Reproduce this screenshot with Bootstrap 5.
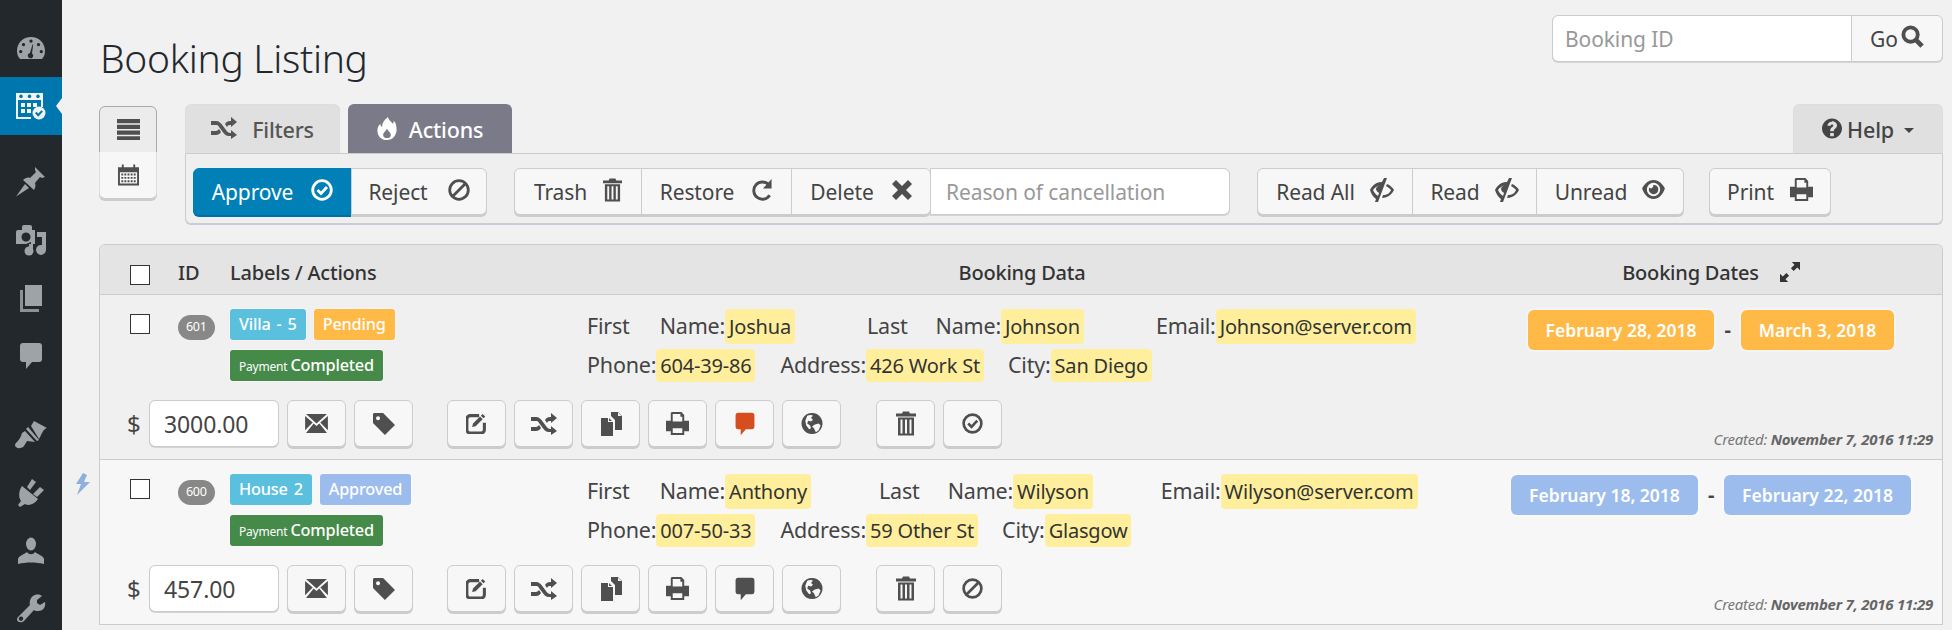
<!doctype html>
<html lang="en"><head><meta charset="utf-8"><title>Booking Listing</title>
<link href="https://cdn.jsdelivr.net/npm/bootstrap@5.3.0/dist/css/bootstrap.min.css" rel="stylesheet">
<style>
html,body{height:630px;overflow:hidden}
body{background:#f1f1f1;font-family:"Noto Sans","Open Sans",sans-serif;color:#444;font-size:20px;letter-spacing:-.2px}
.ic{display:inline-block;fill:currentColor;flex:none}
.wpbar{width:62px;flex:none;background:#23282d;padding-top:19px;height:630px;color:#9ea3a8}
.wpitem{height:58px;display:flex;align-items:center;justify-content:center;position:relative}
.wpitem.on{background:#0076ae;color:#f1f3f5}
.wpitem.on::after{content:"";position:absolute;right:0;top:21px;border-style:solid;border-color:transparent #f1f1f1 transparent transparent;border-width:8px 6px 8px 0}
.sep1{margin-top:18px}.sep2{margin-top:21px}
.mainarea{flex:1;min-width:0;padding:15px 9px 0 37px;position:relative}
.bolt{position:absolute;left:12px;top:473px;color:#8fb0dc}
.headrow{height:89px}
.pagetitle{font-size:39px;font-weight:300;color:#23282d;margin:20px 0 0 1px;line-height:46px;letter-spacing:-.3px}
.findbox{width:391px;height:48px}
.findbox .form-control{height:47px}
.form-control.fld{border-color:#ccc;font-size:21px;color:#444;border-radius:6px;box-shadow:0 1px 0 #d4d4d4;letter-spacing:-.1px}
.fld::placeholder{color:#999}
.btn.tb{background:#f7f7f7;border:1px solid #ccc;color:#444;font-size:21px;letter-spacing:-.1px;border-radius:6px;box-shadow:0 2px 0 #ccc;display:flex;align-items:center;justify-content:center;height:47px;padding:2px 0 0;--bs-btn-hover-bg:#f7f7f7}
.btn.tb .ic{margin-top:-6px;color:#4f4f4f}
.btn.gobtn{width:92px;gap:3px;box-shadow:0 1px 0 #d4d4d4;border-radius:0 6px 6px 0}
.viewpick{width:58px;height:93px;flex:none;margin:2px 28px 0 0}
.viewpick .btn.tb{height:46px;width:58px;padding:0;border-color:#aaa;background:#ececec;color:#555;box-shadow:none}
.viewpick .btn.tb .ic{margin-top:0}
.viewpick .btn.tb+.btn.tb{background:#f7f7f7;border-color:#ddd #ddd #ccc;border-top:0;box-shadow:0 2px 0 #ccc}
.tabbox{flex:1;min-width:0}
.tabline{gap:8px;height:49px}
.tabitem{height:49px;display:flex;align-items:center;justify-content:center;background:#e0e0e0;border:1px solid #ddd;border-bottom:0;border-radius:6px 6px 0 0;color:#555;font-size:21.5px;font-weight:500;letter-spacing:-.2px;padding-top:2px}
.tabitem .ic{margin-top:-4px}
.tf{width:155px;gap:15px}
.ta{width:164px;gap:12px;background:#7b7a89;border-color:#7b7a89;color:#fff}
.th{width:150px;margin-left:auto;gap:5px;font-weight:500;color:#444}
.caretdn{border-style:solid;border-color:#444 transparent transparent;border-width:5px 5px 0;margin-left:5px}
.panelbar{height:71px;border:1px solid #ccc;border-radius:0 0 6px 6px;background:#efefef;box-shadow:0 1px 0 #c9c9d9;padding:14px 0 0 7px}
.btn-group .btn.tb+.btn.tb{margin-left:-1px}
.btn.tb.appr{background:#0080b7;border-color:#0080b7;color:#fff;width:159px;gap:18px;box-shadow:0 2px 0 #0070a3}
.btn.tb.appr .ic{color:#fff}
.w135{width:136px;gap:20px}.w128{width:128px;gap:16px}.w150{width:151px;gap:17px}.w140{width:140px;gap:18px}
.w156{width:156px;gap:15px}.w124{width:125px;gap:15px}.w148{width:148px;gap:15px}.w122{width:122px;gap:16px}
.form-control.fld.reason{width:300px;height:47px;border-radius:0 6px 6px 0;margin-left:-1px;padding-left:15px}
.gapa{margin-left:27px}.gapb{margin-left:25px}
.booktable{margin-top:20px;border:1px solid #ccc;border-bottom:0;border-radius:6px 6px 0 0;overflow:hidden}
.gridline{display:grid;grid-template-columns:78px 52px 357px 870px 1fr}
.headline{height:50px;background:#e4e4e4;border-bottom:1px solid #ccc;font-size:20px;font-weight:500;color:#333;align-items:center;padding-top:7px}
.tick{appearance:none;width:20px;height:20px;margin:0 0 0 30px;background:#fff;border:1px solid #333;display:block}
.headline .tick{margin-top:3px}
.centercell{text-align:center}
.dcell{padding-left:23px;text-align:center}
.headline .dcell .ic{margin-top:-6px}
.bookrow{height:165px;border-bottom:1px solid #ccc;padding-top:14px;background:#f0f0f0}
.bookrow.alt{background:#f7f7f7}
.toparea{height:91px}
.toparea .tick{margin-top:5px}
.idpill{display:inline-block;background:#888;color:#fff;border-radius:13px;height:25px;line-height:24px;font-size:12.5px;padding:0 8px;margin-top:1px;letter-spacing:-.3px}
.lab{display:inline-flex;align-items:center;height:31px;padding:0 9px;border-radius:3px;color:#fff;font-size:16.3px;font-weight:500;letter-spacing:-.2px;word-spacing:2px;box-shadow:0 0 0 1px rgba(255,255,255,.35)}
.lab small{font-size:12px;margin-right:3px;font-weight:400;padding-top:2px}
.lab-c{background:#5bc0de}.lab-o{background:#ffb946}.lab-b{background:#9cbcee}.lab-g{background:#458a48}
.labrow{gap:8px;margin-bottom:10px}
.infoline{display:flex;align-items:center;height:35px;margin-bottom:5px;white-space:nowrap;font-size:21.5px}
.infoline.two{height:33px}
.val{background:#ffef9c;color:#333;border-radius:4px;height:100%;display:flex;align-items:center;padding:0 4px;font-size:20px}
.datelab{display:inline-flex;align-items:center;height:40px;padding:0 18px;border-radius:6px;color:#fff;font-weight:600;font-size:17.5px;letter-spacing:0;box-shadow:0 0 0 2px rgba(255,255,255,.3)}
.dateline{margin-top:1px}
.dash{margin:0 10px;font-weight:700;color:#444}
.actline{padding-left:27px;height:48px}
.money{font-size:24px;margin-right:8px;width:14px}
.form-control.fld.amount{width:130px;height:47px;font-size:23px;padding-left:14px}
.btn.tb.ab{width:59px;margin-left:8px;padding:0}
.btn.tb.ab .ic{margin-top:0}
.btn.tb.sp2{margin-left:34px}.btn.tb.sp3{margin-left:35px}
.stamp{margin-left:auto;align-self:flex-end;font-size:15px;font-style:italic;color:#777;padding-right:9px;line-height:18px;letter-spacing:-.25px}
.stamp b{color:#666}
.gap30{margin-left:30px}.gap28{margin-left:28px}.gap72{margin-left:72px}.gap68{margin-left:68px}
.gap25{margin-left:25px}.gap24{margin-left:24px}
.btn.tb.redc .ic{color:#d64e1f}
</style></head>
<body class="d-flex">
<svg width="0" height="0" class="position-absolute">
<symbol id="i-dash" viewBox="0 0 28 24"><path fill-rule="evenodd" d="M3 23C1 21 0 18 0 15 0 7 6 1 14 1s14 6 14 14c0 3-1 6-3 8ZM14 3.500a1.600 1.600 0 1 0 .01 0ZM6.500 7a1.600 1.600 0 1 0 .01 0ZM21.500 7a1.600 1.600 0 1 0 .01 0ZM3.700 14a1.600 1.600 0 1 0 .01 0ZM24.300 14a1.600 1.600 0 1 0 .01 0ZM15.500 8.500 13 17a2.700 2.700 0 1 0 2 .4l1.200-8.900Z"/></symbol>
<symbol id="i-cal" viewBox="0 0 32 28"><path fill-rule="evenodd" d="M1 1h27v14h-2V8H3v17h13v2H1ZM6 2.500a1.800 1.800 0 1 0 .01 0ZM14.500 2.500a1.800 1.800 0 1 0 .01 0ZM23 2.500a1.800 1.800 0 1 0 .01 0Z"/><path d="M6 11h4v4H6zM12 11h4v4h-4zM18 11h4v4h-4zM6 17h4v4H6zM12 17h4v4h-4z"/><circle cx="24" cy="21" r="6.500" /><path d="m20.800 20.500 2.400 2.700 4-4.400" fill="none" stroke="#0076ae" stroke-width="2"/></symbol>
<symbol id="i-pin" viewBox="0 0 30 30"><path d="M19 0 29 10l-3 1-2-1-5 6c1 3 0 5-1 7L7 13c2-2 5-3 7-2l6-6-1-2ZM9 17l4 4L0 29.500Z"/></symbol>
<symbol id="i-media" viewBox="0 0 32 32"><path fill-rule="evenodd" d="M7 6V3a2 2 0 0 1 2-2h6a2 2 0 0 1 2 2v3h3v14H16v-2l-5 2H1V8a2 2 0 0 1 2-2ZM11 8.500a4.500 4.500 0 1 0 .01 0Z"/><path d="M22 8h9v18a5 5 0 1 1-4-5V13h-5Z"/><circle cx="14" cy="27" r="4.500"/><path d="M14 20h4v7h-4z"/></symbol>
<symbol id="i-pages" viewBox="0 0 24 28"><path d="M6 1h17v21H6Z"/><path d="M1 6h3v19h16v3H1Z" opacity=".85"/></symbol>
<symbol id="i-cm" viewBox="0 0 24 28"><path d="M4 1h16a3 3 0 0 1 3 3v13a3 3 0 0 1-3 3h-7l-6 7v-7H4a3 3 0 0 1-3-3V4a3 3 0 0 1 3-3Z"/></symbol>
<symbol id="i-brush" viewBox="0 0 32 28"><path d="M16 5 19 0l13 7c-4 1-5 6-8 11Z"/><path d="M13 6l11 13-2 1L11 8Z"/><path d="m10 10 10 11-8-1-3 5c-2 3-9 3-9-1 0-2 4-4 6-9l1-3Z"/></symbol>
<symbol id="i-plug" viewBox="0 0 27 28"><path d="M4 7 20 20c-4 6-10 7-13 5l-5 3-2-2 3-4C0 18 1 11 4 7Z"/><path d="m9 8 5-8 4 3-6 8ZM15 15l7-7 4 3-7 7Z"/></symbol>
<symbol id="i-user" viewBox="0 0 28 28"><ellipse cx="14" cy="7" rx="5" ry="6.500"/><path d="M1 27v-5c0-3 7-5 9-7 2 3 6 3 8 0 2 2 9 4 9 7v5c-8-2-18-2-26 0Z"/></symbol>
<symbol id="i-wr" viewBox="0 0 30 30"><path fill-rule="evenodd" d="M19 1c3-1 6 0 7 1l-5 4v3l3 2 5-3c1 4-1 9-7 9-2 0-3 0-4-1L8 27c-2 2-7 2-7-2 0-1 1-2 2-3L14 11c-1-4 1-9 5-10ZM5 22.500a2.200 2.200 0 1 0 .01 0Z"/></symbol>
<symbol id="i-menu" viewBox="0 0 22 20"><path d="M0 0h22v4H0zM0 5.500h22v4H0zM0 11h22v4H0zM0 16.500h22V20H0z"/></symbol>
<symbol id="i-calg" viewBox="0 0 22 22"><path fill-rule="evenodd" d="M0 3h4V0h2v3h10V0h2v3h4v19H0ZM2 8v12h18V8ZM3.500 9.500h2v2h-2zM6.700 9.500h2v2h-2zM10 9.500h2v2h-2zM13.300 9.500h2v2h-2zM16.500 9.500h2v2h-2zM3.500 13h2v2h-2zM6.700 13h2v2h-2zM10 13h2v2h-2zM13.300 13h2v2h-2zM16.500 13h2v2h-2zM3.500 16.500h2v2h-2zM6.700 16.500h2v2h-2zM10 16.500h2v2h-2zM13.300 16.500h2v2h-2zM16.500 16.500h2v2h-2z"/></symbol>
<symbol id="i-rand" viewBox="0 0 26 22"><path d="M0 4h5c3 0 5 2 7 5l3 4c1 2 3 3 4 3h1v-3l6 5-6 4v-3h-2c-3 0-5-2-7-5l-3-4C7 8 6 8 5 8H0ZM0 14h5c1 0 2-1 3-2l2 3c-1 2-3 3-5 3H0ZM20 4V0l6 5-6 5V8h-1c-1 0-2 0-3 2l-2-3c1-2 3-3 5-3Z"/></symbol>
<symbol id="i-fire" viewBox="0 0 20 24"><path fill-rule="evenodd" d="M11 0c1 4 3 4 5 7 1-1 1-2 1-3 2 2 3 5 3 9 0 6-4 11-10 11S0 20 0 14c0-3 1-5 3-7 0 2 1 3 2 3 0-4 2-7 6-10Zm-1 12c-1 3-4 4-4 7 0 2 2 3 4 3s4-1 4-3c0-3-3-4-4-7Z"/></symbol>
<symbol id="i-ok" viewBox="0 0 22 22"><circle cx="11" cy="11" r="9.300" fill="none" stroke="currentColor" stroke-width="2.800"/><path d="m6.500 11 3.500 3.500 6-6.500" fill="none" stroke="currentColor" stroke-width="2.800"/></symbol>
<symbol id="i-ban" viewBox="0 0 22 22"><circle cx="11" cy="11" r="9.300" fill="none" stroke="currentColor" stroke-width="2.800"/><path d="M4.500 17.500 17.500 4.500" stroke="currentColor" stroke-width="2.800"/></symbol>
<symbol id="i-trash" viewBox="0 0 20 24"><path fill-rule="evenodd" d="M7 0h6l1 2h6v3H0V2h6ZM2 6h16v18H2ZM4.500 8v14h2V8ZM9 8v14h2V8ZM13.500 8v14h2V8Z"/></symbol>
<symbol id="i-ref" viewBox="0 0 22 24"><path d="M19 18A9 9 0 1 1 18 7" fill="none" stroke="currentColor" stroke-width="3"/><path d="M21 1v10h-9Z"/></symbol>
<symbol id="i-x" viewBox="0 0 20 20"><path d="m4 0 6 6 6-6 4 4-6 6 6 6-4 4-6-6-6 6-4-4 6-6-6-6Z"/></symbol>
<symbol id="i-eyec" viewBox="0 0 24 24"><path fill-rule="evenodd" d="M14 0h3L8 24H5l1-3C3 19 1 15 0 12c2-4 6-8 11-8h1ZM10 7c-3 1-6 3-7 5 1 2 2 4 5 6l1-3c-1-1-3-2-3-4 0-2 2-3 4-4ZM17 6c3 1 6 4 7 6-2 4-6 8-12 8l1-3c4 0 7-2 8-5-1-1-3-3-5-4Z"/></symbol>
<symbol id="i-eye" viewBox="0 0 24 20"><path fill-rule="evenodd" d="M12 0c6 0 10 5 12 9-2 6-6 11-12 11S2 15 0 9C2 5 6 0 12 0Zm0 3a7 7 0 1 0 .01 0Z"/><path d="M12 5a5 5 0 1 1-4.500 3c1 1.500 4 1.500 4.500-3Z"/></symbol>
<symbol id="i-print" viewBox="0 0 24 24"><path fill-rule="evenodd" d="M6 0h10l3 3v6h5v11h-5v4H5v-4H0V9h5V1ZM7 2v8h10V5h-2V2ZM7 17v5h10v-5Z"/></symbol>
<symbol id="i-mail" viewBox="0 0 24 20"><path d="M1 0h22L12 10ZM0 2l8 7-8 8ZM24 2v15l-8-8ZM9 10l3 2.500L15 10l8 10H1Z"/></symbol>
<symbol id="i-tag" viewBox="0 0 24 24"><path fill-rule="evenodd" d="M1 0h10l13 13-11 11L0 11V1ZM5.500 3.500a2.200 2.200 0 1 0 .01 0Z"/></symbol>
<symbol id="i-edit" viewBox="0 0 24 24"><path d="M15 3H5a4 4 0 0 0-4 4v12a4 4 0 0 0 4 4h12a4 4 0 0 0 4-4v-8" fill="none" stroke="currentColor" stroke-width="3.500"/><path d="m8 12 8-8 3 3-8 8-4 1ZM19 1l3 3-2 2-3-3Z"/></symbol>
<symbol id="i-dup" viewBox="0 0 22 24"><path d="M1 6h7v4h5v14H1ZM9 6l3 3H9ZM11 0h7l4 4v14h-7V8l-4-4ZM18 .5V4h3.500Z"/></symbol>
<symbol id="i-glob" viewBox="0 0 22 24"><path fill-rule="evenodd" d="M11 1a11 11 0 1 0 .01 0ZM6 4c2-1 5-1 6 0l-2 2 2 2-2 2-3-1-1 3 3 2 1 3-2 1-3-4-1-5ZM14 13l4-1 2 2-2 5-3 2-2-4-2-2Z"/></symbol>
<symbol id="i-q" viewBox="0 0 22 24"><path fill-rule="evenodd" d="M11 1c6 0 11 5 11 11s-5 11-11 11S0 18 0 12 5 1 11 1ZM9 17v3.500h4V17ZM11 4.500c-3 0-5 2-5 4.500h3.500c0-1 .7-1.500 1.500-1.500s1.500.5 1.500 1.300c0 1.500-3.500 2-3.500 6.200h4c0-3 3.500-3 3.500-6.500 0-2.500-2.500-4.500-5.500-4.500Z"/></symbol>
<symbol id="i-srch" viewBox="0 0 24 24"><circle cx="10" cy="10" r="7.500" fill="none" stroke="currentColor" stroke-width="4"/><path d="m15 15 7 7" stroke="currentColor" stroke-width="5"/></symbol>
<symbol id="i-exp" viewBox="0 0 22 22"><path d="M13 0h9v9l-3-3-4 4-3-3 4-4ZM0 13l3 3 4-4 3 3-4 4 3 3H0Z"/></symbol>
<symbol id="i-bolt" viewBox="0 0 16 22"><path d="M9 0 2 11h5L3 22l13-13h-6l3-7Z"/></symbol>
</svg>

<aside class="wpbar">
<div class="wpitem"><svg class="ic" width="28" height="24"><use href="#i-dash"/></svg></div>
<div class="wpitem on"><svg class="ic" width="32" height="28"><use href="#i-cal"/></svg></div>
<div class="wpitem sep1"><svg class="ic" width="30" height="30"><use href="#i-pin"/></svg></div>
<div class="wpitem"><svg class="ic" width="32" height="32"><use href="#i-media"/></svg></div>
<div class="wpitem"><svg class="ic" width="24" height="28"><use href="#i-pages"/></svg></div>
<div class="wpitem"><svg class="ic" width="24" height="28"><use href="#i-cm"/></svg></div>
<div class="wpitem sep2"><svg class="ic" width="32" height="28"><use href="#i-brush"/></svg></div>
<div class="wpitem"><svg class="ic" width="27" height="28"><use href="#i-plug"/></svg></div>
<div class="wpitem"><svg class="ic" width="28" height="28"><use href="#i-user"/></svg></div>
<div class="wpitem"><svg class="ic" width="30" height="30"><use href="#i-wr"/></svg></div>
</aside>

<main class="mainarea">
<svg class="ic bolt" width="16" height="22"><use href="#i-bolt"/></svg>
<div class="d-flex justify-content-between align-items-start headrow">
  <h1 class="pagetitle">Booking Listing</h1>
  <div class="input-group findbox flex-nowrap">
    <input class="form-control fld" placeholder="Booking ID">
    <button class="btn tb gobtn" type="button">Go <svg class="ic" width="23" height="23"><use href="#i-srch"/></svg></button>
  </div>
</div>
<div class="d-flex">
  <div class="btn-group-vertical viewpick">
    <button class="btn tb" type="button"><svg class="ic" width="23" height="21"><use href="#i-menu"/></svg></button>
    <button class="btn tb" type="button"><svg class="ic" width="21" height="22"><use href="#i-calg"/></svg></button>
  </div>
  <div class="tabbox">
    <div class="d-flex tabline">
      <div class="tabitem tf"><svg class="ic" width="26" height="22"><use href="#i-rand"/></svg>Filters</div>
      <div class="tabitem ta"><svg class="ic" width="20" height="23"><use href="#i-fire"/></svg>Actions</div>
      <div class="tabitem th"><svg class="ic" width="20" height="23"><use href="#i-q"/></svg>Help<span class="caretdn"></span></div>
    </div>
    <div class="panelbar d-flex">
      <div class="btn-group">
        <button class="btn tb appr" type="button">Approve <svg class="ic" width="22" height="22"><use href="#i-ok"/></svg></button>
        <button class="btn tb w135" type="button">Reject <svg class="ic" width="22" height="22"><use href="#i-ban"/></svg></button>
      </div>
      <div class="d-flex gapa">
        <div class="btn-group">
          <button class="btn tb w128" type="button">Trash <svg class="ic" width="19" height="24"><use href="#i-trash"/></svg></button>
          <button class="btn tb w150" type="button">Restore <svg class="ic" width="22" height="23"><use href="#i-ref"/></svg></button>
          <button class="btn tb w140" type="button">Delete <svg class="ic" width="20" height="20"><use href="#i-x"/></svg></button>
        </div>
        <input class="form-control fld reason" placeholder="Reason of cancellation">
      </div>
      <div class="btn-group gapa">
        <button class="btn tb w156" type="button">Read All <svg class="ic" width="24" height="24"><use href="#i-eyec"/></svg></button>
        <button class="btn tb w124" type="button">Read <svg class="ic" width="24" height="24"><use href="#i-eyec"/></svg></button>
        <button class="btn tb w148" type="button">Unread <svg class="ic" width="23" height="19"><use href="#i-eye"/></svg></button>
      </div>
      <button class="btn tb w122 gapb" type="button">Print <svg class="ic" width="23" height="23"><use href="#i-print"/></svg></button>
    </div>
  </div>
</div>

<div class="booktable">
  <div class="gridline headline">
    <div><input type="checkbox" class="tick" aria-label="all"></div>
    <div>ID</div>
    <div>Labels / Actions</div>
    <div class="centercell">Booking Data</div>
    <div class="dcell">Booking Dates <svg class="ic ms-3" width="20" height="20"><use href="#i-exp"/></svg></div>
  </div>

  <div class="bookrow">
    <div class="gridline toparea">
      <div><input type="checkbox" class="tick" aria-label="601"></div>
      <div><span class="idpill">601</span></div>
      <div>
        <div class="d-flex labrow"><span class="lab lab-c">Villa - 5</span><span class="lab lab-o">Pending</span></div>
        <div class="d-flex labrow"><span class="lab lab-g"><small>Payment</small>Completed</span></div>
      </div>
      <div>
        <div class="infoline"><span>First</span><span class="gap30">Name:</span><span class="val">Joshua</span><span class="gap72">Last</span><span class="gap28">Name:</span><span class="val">Johnson</span><span class="gap72">Email:</span><span class="val">Johnson@server.com</span></div>
        <div class="infoline two"><span>Phone:</span><span class="val">604-39-86</span><span class="gap25">Address:</span><span class="val">426 Work St</span><span class="gap24">City:</span><span class="val">San Diego</span></div>
      </div>
      <div class="dcell dateline"><span class="datelab lab-o">February 28, 2018</span><span class="dash">-</span><span class="datelab lab-o">March 3, 2018</span></div>
    </div>
    <div class="d-flex actline">
      <span class="money align-self-center">$</span><input class="form-control fld amount" value="3000.00" aria-label="price">
      <button class="btn tb ab" type="button"><svg class="ic" width="23" height="19"><use href="#i-mail"/></svg></button>
      <button class="btn tb ab" type="button"><svg class="ic" width="22" height="22"><use href="#i-tag"/></svg></button>
      <button class="btn tb ab sp2" type="button"><svg class="ic" width="21" height="21"><use href="#i-edit"/></svg></button>
      <button class="btn tb ab" type="button"><svg class="ic" width="26" height="22"><use href="#i-rand"/></svg></button>
      <button class="btn tb ab" type="button"><svg class="ic" width="22" height="24"><use href="#i-dup"/></svg></button>
      <button class="btn tb ab" type="button"><svg class="ic" width="23" height="23"><use href="#i-print"/></svg></button>
      <button class="btn tb ab redc" type="button"><svg class="ic" width="22" height="24"><use href="#i-cm"/></svg></button>
      <button class="btn tb ab" type="button"><svg class="ic" width="22" height="23"><use href="#i-glob"/></svg></button>
      <button class="btn tb ab sp3" type="button"><svg class="ic" width="20" height="25"><use href="#i-trash"/></svg></button>
      <button class="btn tb ab" type="button"><svg class="ic" width="21" height="21"><use href="#i-ok"/></svg></button>
      <span class="stamp">Created: <b>November 7, 2016 11:29</b></span>
    </div>
  </div>

  <div class="bookrow alt">
    <div class="gridline toparea">
      <div><input type="checkbox" class="tick" aria-label="600"></div>
      <div><span class="idpill">600</span></div>
      <div>
        <div class="d-flex labrow"><span class="lab lab-c">House 2</span><span class="lab lab-b">Approved</span></div>
        <div class="d-flex labrow"><span class="lab lab-g"><small>Payment</small>Completed</span></div>
      </div>
      <div>
        <div class="infoline"><span>First</span><span class="gap30">Name:</span><span class="val">Anthony</span><span class="gap68">Last</span><span class="gap28">Name:</span><span class="val">Wilyson</span><span class="gap68">Email:</span><span class="val">Wilyson@server.com</span></div>
        <div class="infoline two"><span>Phone:</span><span class="val">007-50-33</span><span class="gap25">Address:</span><span class="val">59 Other St</span><span class="gap24">City:</span><span class="val">Glasgow</span></div>
      </div>
      <div class="dcell dateline"><span class="datelab lab-b">February 18, 2018</span><span class="dash">-</span><span class="datelab lab-b">February 22, 2018</span></div>
    </div>
    <div class="d-flex actline">
      <span class="money align-self-center">$</span><input class="form-control fld amount" value="457.00" aria-label="price">
      <button class="btn tb ab" type="button"><svg class="ic" width="23" height="19"><use href="#i-mail"/></svg></button>
      <button class="btn tb ab" type="button"><svg class="ic" width="22" height="22"><use href="#i-tag"/></svg></button>
      <button class="btn tb ab sp2" type="button"><svg class="ic" width="21" height="21"><use href="#i-edit"/></svg></button>
      <button class="btn tb ab" type="button"><svg class="ic" width="26" height="22"><use href="#i-rand"/></svg></button>
      <button class="btn tb ab" type="button"><svg class="ic" width="22" height="24"><use href="#i-dup"/></svg></button>
      <button class="btn tb ab" type="button"><svg class="ic" width="23" height="23"><use href="#i-print"/></svg></button>
      <button class="btn tb ab" type="button"><svg class="ic" width="22" height="24"><use href="#i-cm"/></svg></button>
      <button class="btn tb ab" type="button"><svg class="ic" width="22" height="23"><use href="#i-glob"/></svg></button>
      <button class="btn tb ab sp3" type="button"><svg class="ic" width="20" height="25"><use href="#i-trash"/></svg></button>
      <button class="btn tb ab" type="button"><svg class="ic" width="21" height="21"><use href="#i-ban"/></svg></button>
      <span class="stamp">Created: <b>November 7, 2016 11:29</b></span>
    </div>
  </div>
</div>
</main>
<script src="https://cdn.jsdelivr.net/npm/bootstrap@5.3.0/dist/js/bootstrap.bundle.min.js"></script>
</body></html>
